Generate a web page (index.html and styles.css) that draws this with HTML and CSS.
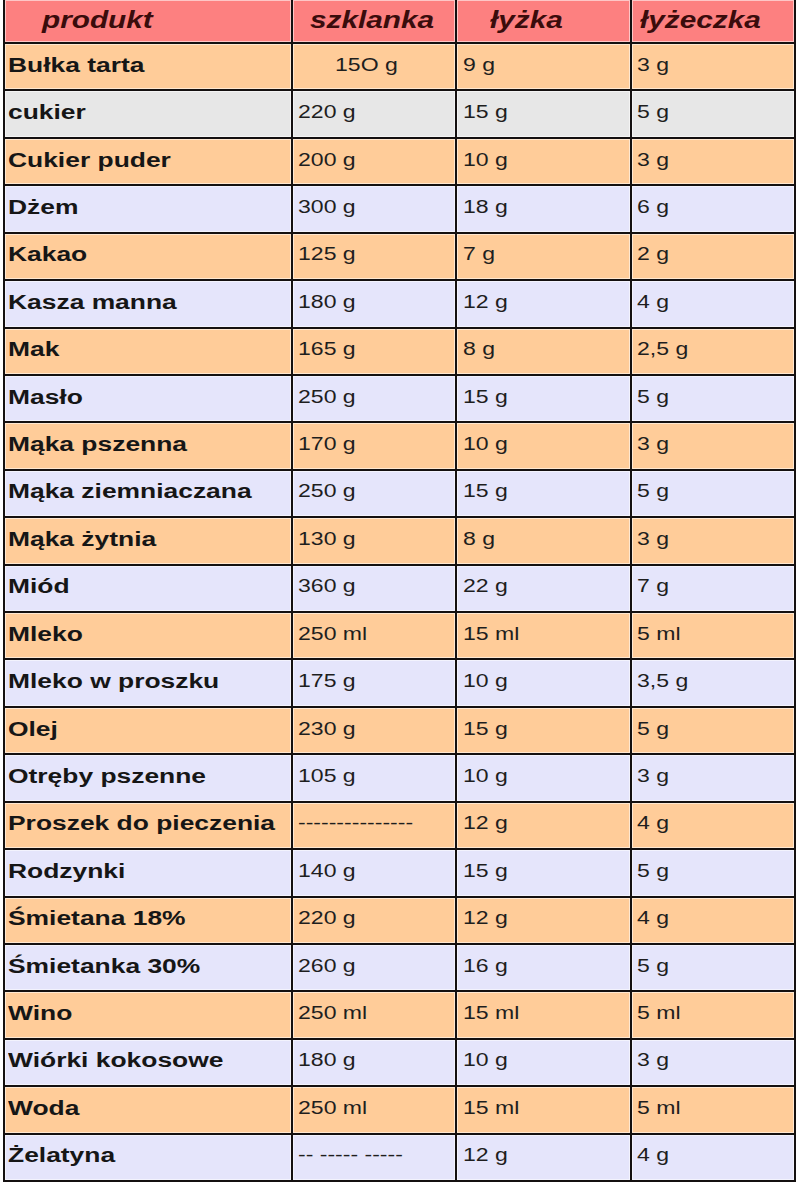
FILE: index.html
```html
<!DOCTYPE html>
<html lang="pl">
<head>
<meta charset="utf-8">
<title>Miary kuchenne</title>
<link rel="stylesheet" href="styles.css">
</head>
<body>
<div class="grid">
  <div class="row head">
    <div class="c c1"><span class="t">produkt</span></div>
    <div class="c c2"><span class="t">szklanka</span></div>
    <div class="c c3"><span class="t">łyżka</span></div>
    <div class="c c4"><span class="t">łyżeczka</span></div>
  </div>
  <div class="row o"><div class="c c1"><span class="t">Bułka tarta</span></div><div class="c c2 first"><span class="t">15O g</span></div><div class="c c3"><span class="t">9 g</span></div><div class="c c4"><span class="t">3 g</span></div></div>
  <div class="row g"><div class="c c1"><span class="t">cukier</span></div><div class="c c2"><span class="t">220 g</span></div><div class="c c3"><span class="t">15 g</span></div><div class="c c4"><span class="t">5 g</span></div></div>
  <div class="row o"><div class="c c1"><span class="t">Cukier puder</span></div><div class="c c2"><span class="t">200 g</span></div><div class="c c3"><span class="t">10 g</span></div><div class="c c4"><span class="t">3 g</span></div></div>
  <div class="row l"><div class="c c1"><span class="t">Dżem</span></div><div class="c c2"><span class="t">300 g</span></div><div class="c c3"><span class="t">18 g</span></div><div class="c c4"><span class="t">6 g</span></div></div>
  <div class="row o"><div class="c c1"><span class="t">Kakao</span></div><div class="c c2"><span class="t">125 g</span></div><div class="c c3"><span class="t">7 g</span></div><div class="c c4"><span class="t">2 g</span></div></div>
  <div class="row l"><div class="c c1"><span class="t">Kasza manna</span></div><div class="c c2"><span class="t">180 g</span></div><div class="c c3"><span class="t">12 g</span></div><div class="c c4"><span class="t">4 g</span></div></div>
  <div class="row o"><div class="c c1"><span class="t">Mak</span></div><div class="c c2"><span class="t">165 g</span></div><div class="c c3"><span class="t">8 g</span></div><div class="c c4"><span class="t">2,5 g</span></div></div>
  <div class="row l"><div class="c c1"><span class="t">Masło</span></div><div class="c c2"><span class="t">250 g</span></div><div class="c c3"><span class="t">15 g</span></div><div class="c c4"><span class="t">5 g</span></div></div>
  <div class="row o"><div class="c c1"><span class="t">Mąka pszenna</span></div><div class="c c2"><span class="t">170 g</span></div><div class="c c3"><span class="t">10 g</span></div><div class="c c4"><span class="t">3 g</span></div></div>
  <div class="row l"><div class="c c1"><span class="t">Mąka ziemniaczana</span></div><div class="c c2"><span class="t">250 g</span></div><div class="c c3"><span class="t">15 g</span></div><div class="c c4"><span class="t">5 g</span></div></div>
  <div class="row o"><div class="c c1"><span class="t">Mąka żytnia</span></div><div class="c c2"><span class="t">130 g</span></div><div class="c c3"><span class="t">8 g</span></div><div class="c c4"><span class="t">3 g</span></div></div>
  <div class="row l"><div class="c c1"><span class="t">Miód</span></div><div class="c c2"><span class="t">360 g</span></div><div class="c c3"><span class="t">22 g</span></div><div class="c c4"><span class="t">7 g</span></div></div>
  <div class="row o"><div class="c c1"><span class="t">Mleko</span></div><div class="c c2"><span class="t">250 ml</span></div><div class="c c3"><span class="t">15 ml</span></div><div class="c c4"><span class="t">5 ml</span></div></div>
  <div class="row l"><div class="c c1"><span class="t">Mleko w proszku</span></div><div class="c c2"><span class="t">175 g</span></div><div class="c c3"><span class="t">10 g</span></div><div class="c c4"><span class="t">3,5 g</span></div></div>
  <div class="row o"><div class="c c1"><span class="t">Olej</span></div><div class="c c2"><span class="t">230 g</span></div><div class="c c3"><span class="t">15 g</span></div><div class="c c4"><span class="t">5 g</span></div></div>
  <div class="row l"><div class="c c1"><span class="t">Otręby pszenne</span></div><div class="c c2"><span class="t">105 g</span></div><div class="c c3"><span class="t">10 g</span></div><div class="c c4"><span class="t">3 g</span></div></div>
  <div class="row o"><div class="c c1"><span class="t">Proszek do pieczenia</span></div><div class="c c2"><span class="t">---------------</span></div><div class="c c3"><span class="t">12 g</span></div><div class="c c4"><span class="t">4 g</span></div></div>
  <div class="row l"><div class="c c1"><span class="t">Rodzynki</span></div><div class="c c2"><span class="t">140 g</span></div><div class="c c3"><span class="t">15 g</span></div><div class="c c4"><span class="t">5 g</span></div></div>
  <div class="row o"><div class="c c1"><span class="t">Śmietana 18%</span></div><div class="c c2"><span class="t">220 g</span></div><div class="c c3"><span class="t">12 g</span></div><div class="c c4"><span class="t">4 g</span></div></div>
  <div class="row l"><div class="c c1"><span class="t">Śmietanka 30%</span></div><div class="c c2"><span class="t">260 g</span></div><div class="c c3"><span class="t">16 g</span></div><div class="c c4"><span class="t">5 g</span></div></div>
  <div class="row o"><div class="c c1"><span class="t">Wino</span></div><div class="c c2"><span class="t">250 ml</span></div><div class="c c3"><span class="t">15 ml</span></div><div class="c c4"><span class="t">5 ml</span></div></div>
  <div class="row l"><div class="c c1"><span class="t">Wiórki kokosowe</span></div><div class="c c2"><span class="t">180 g</span></div><div class="c c3"><span class="t">10 g</span></div><div class="c c4"><span class="t">3 g</span></div></div>
  <div class="row o"><div class="c c1"><span class="t">Woda</span></div><div class="c c2"><span class="t">250 ml</span></div><div class="c c3"><span class="t">15 ml</span></div><div class="c c4"><span class="t">5 ml</span></div></div>
  <div class="row l"><div class="c c1"><span class="t">Żelatyna</span></div><div class="c c2"><span class="t">-- ----- -----</span></div><div class="c c3"><span class="t">12 g</span></div><div class="c c4"><span class="t">4 g</span></div></div>
</div>
</body>
</html>
```
FILE: styles.css
```css
html, body {
  margin: 0;
  padding: 0;
  background: #ffffff;
}

body {
  font-family: "Liberation Sans", Arial, sans-serif;
}

.grid {
  margin-left: 3px;
  width: 793px;
  height: 1182px;
  box-sizing: border-box;
  padding: 0 2px 2px 2px;
  background: #141010;
  display: grid;
  grid-template-columns: 286px 162px 173px 162px;
  grid-template-rows: 42px repeat(24, 1fr);
  gap: 2px;
}

.row {
  display: contents;
}

.c {
  display: flex;
  align-items: center;
  padding-bottom: 3px;
  box-sizing: border-box;
  overflow: hidden;
  box-shadow: inset 0 0 0 1px rgba(255, 255, 255, 0.55);
  font-size: 18px;
  color: #1e1e1e;
}

.t {
  display: inline-block;
  white-space: nowrap;
  transform: scaleX(1.28);
  transform-origin: 0 50%;
}

.c1 { padding-left: 3px; font-weight: bold; font-size: 20px; color: #161616; }
.c1 .t { transform: scaleX(1.32); }
.c2 { padding-left: 5px; }
.c3 { padding-left: 6px; }
.c4 { padding-left: 5px; }
.c2.first { padding-left: 42px; }

.head .c {
  background: #fd8080;
  font-weight: bold;
  font-style: italic;
  font-size: 24px;
  color: #3a0c0c;
  padding-bottom: 2px;
}
.head .t { transform: scaleX(1.24); }
.head .c1 { padding-left: 37px; }
.head .c2 { padding-left: 17px; }
.head .c3 { padding-left: 33px; }
.head .c4 { padding-left: 8px; }

.o .c { background: #ffcc99; }
.l .c { background: #e5e5fb; }
.g .c { background: #e7e7e7; }
```
